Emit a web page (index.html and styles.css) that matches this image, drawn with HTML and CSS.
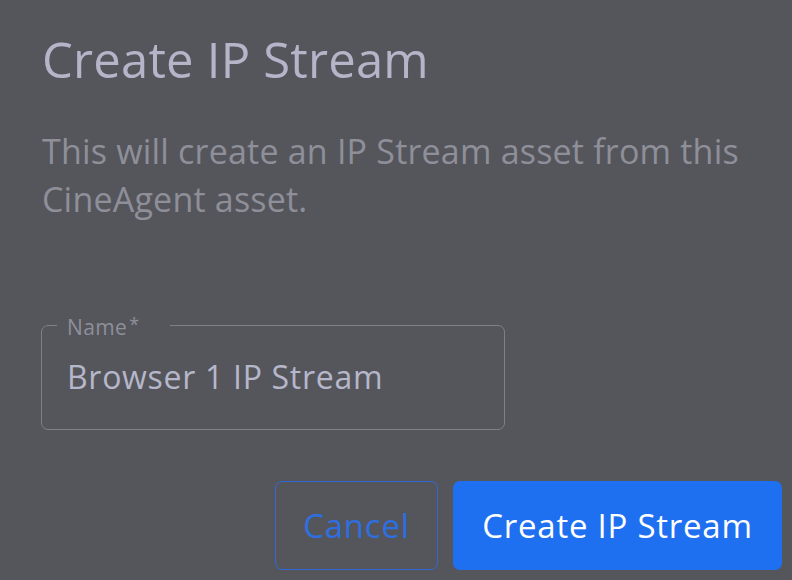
FILE: index.html
```html
<!DOCTYPE html>
<html lang="en">

<head>
    <meta charset="UTF-8" />
    <meta name="viewport" content="width=device-width, initial-scale=1.0" />
    <title>Create IP Stream</title>
    <link rel="stylesheet" href="styles.css">
</head>

<body>
    <div class="dialog">
        <h1 class="dialog-title">Create IP Stream</h1>
        <p class="dialog-text">This will create an IP Stream asset from this CineAgent asset.</p>

        <fieldset class="field">
            <legend class="field-label">Name<span class="req">*</span></legend>
            <div class="field-value">Browser 1 IP Stream</div>
        </fieldset>

        <div class="actions">
            <button class="btn btn-outline">Cancel</button>
            <button class="btn btn-primary">Create IP Stream</button>
        </div>
    </div>
</body>

</html>
```

FILE: styles.css
```css
body {
    margin: 0;
    background-color: #55565c;
    font-family: "Open Sans", "Noto Sans", sans-serif;
    height: 580px;
    overflow: hidden;
}

.dialog {
    padding: 0 10px 0 42px;
}

.dialog-title {
    margin: 0;
    padding-top: 26px;
    font-size: 49px;
    font-weight: 400;
    line-height: 66px;
    letter-spacing: 0.2px;
    color: #b4b5c8;
}

.dialog-text {
    margin: 35px 0 0;
    width: 730px;
    font-size: 34px;
    line-height: 48px;
    letter-spacing: 0.2px;
    color: #8e8f99;
}

/* outlined text field with notched label */
.field {
    margin: 89px 0 0 -1px;
    padding: 0 0 0 15px;
    width: 447px;
    height: 116px;
    border: 1px solid #7e7f88;
    border-radius: 7px;
}

.field-label {
    padding: 0 30px 0 10px;
    font-size: 21px;
    line-height: 24px;
    letter-spacing: 0.4px;
    color: #8e8f99;
}

.req {
    font-size: 18px;
    vertical-align: 4px;
    margin-left: 2px;
}

.field-value {
    padding: 18px 0 0 10px;
    font-size: 32px;
    line-height: 40px;
    letter-spacing: 0.7px;
    color: #b6b7ca;
}

.actions {
    display: flex;
    justify-content: flex-end;
    gap: 15px;
    margin-top: 51px;
}

.btn {
    height: 89px;
    border-radius: 7px;
    font-family: inherit;
    font-size: 33px;
    letter-spacing: 0.75px;
    cursor: pointer;
}

.btn-outline {
    width: 163px;
    background: none;
    border: 1px solid #3069d6;
    color: #2d6fe2;
}

.btn-primary {
    width: 329px;
    background-color: #1f70f1;
    border: none;
    color: #ffffff;
}
```
